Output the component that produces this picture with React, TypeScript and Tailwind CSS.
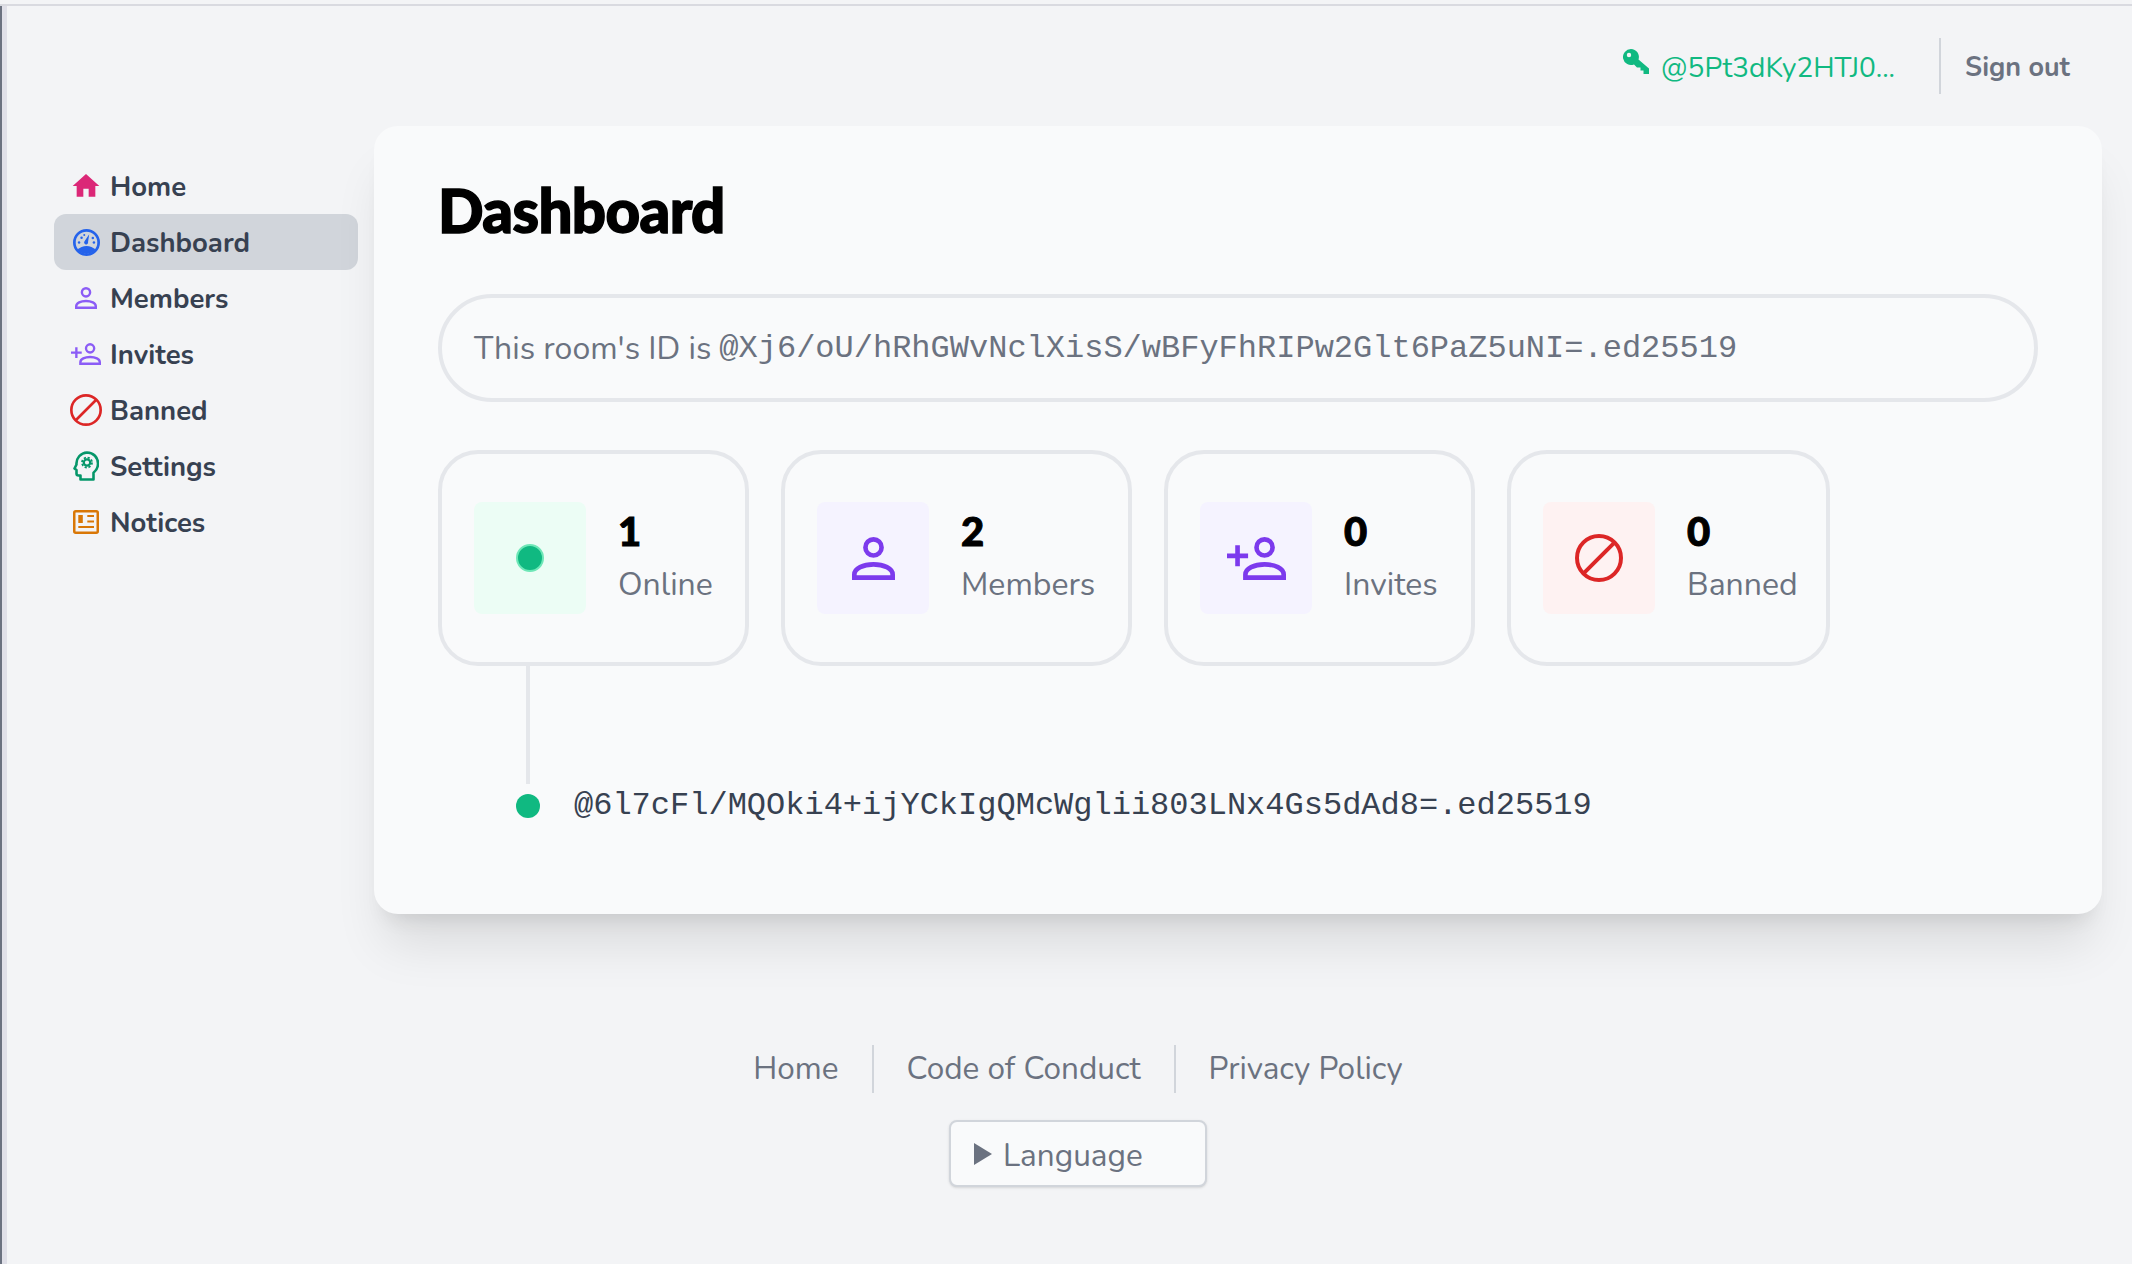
import React from 'react';

type IconProps = { className?: string };

const Home = ({ className }: IconProps) => (
  <svg viewBox="0 0 24 24" className={className} fill="currentColor"><path d="M10 20v-6h4v6h5v-8h3L12 3 2 12h3v8z" /></svg>
);
const Gauge = ({ className }: IconProps) => (
  <svg viewBox="0 0 24 24" className={className} fill="currentColor">
    <circle cx="12" cy="12" r="10.8" fill="none" stroke="currentColor" strokeWidth={2.4} />
    <path d="M3.8 18.5C6 16 9 15 12 15s6 1 8.2 3.5A11 11 0 0 1 3.8 18.5z" />
    <path d="M14.4 4.6 13.4 11.4a1.8 1.8 0 1 1-3-.8z" />
    <circle cx="7.6" cy="7.8" r="1.1" /><circle cx="5.4" cy="12" r="1.1" /><circle cx="10" cy="5.4" r="0.9" /><circle cx="17.6" cy="8" r="1.1" /><circle cx="18.6" cy="12" r="1.1" />
  </svg>
);
const User = ({ className }: IconProps) => (
  <svg viewBox="0 0 24 24" className={className} fill="none" stroke="currentColor" strokeWidth={2.6}>
    <circle cx="12" cy="5.8" r="4.5" />
    <path d="M1.3 22.7h21.4v-1.7c0-3.5-5-5.7-10.7-5.7S1.3 17.5 1.3 21z" />
  </svg>
);
const UserAdd = ({ className }: IconProps) => (
  <svg viewBox="0 0 33 24" className={className} fill="none" stroke="currentColor" strokeWidth={2.6}>
    <circle cx="21" cy="5.8" r="4.5" />
    <path d="M10.3 22.7h21.4v-1.7c0-3.5-5-5.7-10.7-5.7s-10.7 2.2-10.7 5.7z" />
    <path d="M0 10.5h11.8M5.9 4.6v11.8" />
  </svg>
);
const Ban = ({ className }: IconProps) => (
  <svg viewBox="0 0 24 24" className={className} fill="none" stroke="currentColor" strokeWidth={2}><circle cx="12" cy="12" r="11" /><path d="M4.3 19.7 19.7 4.3" /></svg>
);
const HeadCog = ({ className }: IconProps) => (
  <svg viewBox="0 0 26 30" className={className} fill="none" stroke="currentColor" strokeWidth={2.6}>
    <path d="M7.5 28.5v-4H5.5a2 2 0 0 1-2-2V19l-2-1.5 2-4A11 11 0 0 1 14 1.5c6.5 0 11 5 11 11 0 4-2 7.300-4.500 9.200v6.800z" strokeLinejoin="round" />
    <circle cx="14" cy="11.500" r="3.200" strokeWidth={2.200} />
    <circle cx="14" cy="11.500" r="5" strokeWidth={1.800} strokeDasharray="2.200 1.730" />
  </svg>
);
const Newspaper = ({ className }: IconProps) => (
  <svg viewBox="0 0 26 24" className={className} fill="none" stroke="currentColor" strokeWidth={2.5}>
    <rect x="1.250" y="1.250" width="23.500" height="21.500" rx="1.500" />
    <rect x="5.300" y="5" width="4.500" height="8" fill="currentColor" stroke="none" />
    <path d="M14.300 6h6.700M14.300 11.500h6.700M5.300 17h15.700" strokeWidth={2} />
  </svg>
);
const Key = ({ className }: IconProps) => (
  <svg viewBox="0 0 26 27" className={className} fill="currentColor">
    <path fillRule="evenodd" d="M8 0a8 8 0 1 0 3 15.400l3 3h3.500v3h3v3.600H26v-5.500L15.500 10.500A8 8 0 0 0 8 0zM6 3.800a2.200 2.200 0 1 1 0 4.400 2.200 2.200 0 0 1 0-4.400z" />
  </svg>
);

const navItems = [
  { label: 'Home', icon: <Home className="w-[32px] h-[32px] text-[#db2777]" /> },
  { label: 'Dashboard', icon: <Gauge className="w-[27px] h-[27px] text-[#2563eb]" />, active: true },
  { label: 'Members', icon: <User className="w-[22px] h-[22px] text-[#8b5cf6]" /> },
  { label: 'Invites', icon: <UserAdd className="w-[30px] h-[22px] text-[#8b5cf6]" /> },
  { label: 'Banned', icon: <Ban className="w-[32px] h-[32px] text-[#dc2626]" /> },
  { label: 'Settings', icon: <HeadCog className="w-[26px] h-[30px] text-[#059669]" /> },
  { label: 'Notices', icon: <Newspaper className="w-[26px] h-[24px] text-[#d97706]" /> },
];

const stats = [
  { value: '1', label: 'Online', tile: 'bg-[#ecfdf5]', w: 'w-[311px]', icon: <span className="w-[28px] h-[28px] rounded-full bg-[#10b981] border-2 border-[#6ee7b7]" /> },
  { value: '2', label: 'Members', tile: 'bg-[#f5f3ff]', w: 'w-[351px]', icon: <User className="w-[43px] h-[43px] text-[#7c3aed]" /> },
  { value: '0', label: 'Invites', tile: 'bg-[#f5f3ff]', w: 'w-[311px]', icon: <UserAdd className="w-[59px] h-[43px] text-[#7c3aed]" /> },
  { value: '0', label: 'Banned', tile: 'bg-[#fef2f2]', w: 'w-[323px]', icon: <Ban className="w-[48px] h-[48px] text-[#dc2626]" /> },
];

const App: React.FC = () => {
  return (
    <div className='h-[1264px] overflow-hidden bg-[#f3f4f6] font-["Nunito","Noto_Sans",sans-serif]'>
      <div className="h-[4px]" />
      <div className="h-[2px] bg-[#d9dae0]" />
      <div className="flex h-[1258px]">
        {/* window edge */}
        <div className="w-[2px] bg-[#6b7280]" />
        <div className="w-[5px] bg-[#e0e0e8]" />
        <div className="flex-1 min-w-0">
          {/* Top bar */}
          <header className="h-[120px] flex justify-end items-start pt-[32px] pr-[62px]">
            <div className="flex items-center h-[56px]">
              <Key className="w-[26px] h-[27px] text-[#10b981] -mt-[7px]" />
              <span className="w-[234px] ml-[12px] text-[28px] text-[#10b981] truncate pt-[4px]">@5Pt3dKy2HTJ0...</span>
              <span className="w-[2px] h-[56px] bg-[#d1d5db] ml-[44px]" />
              <span className="ml-[24px] text-[27px] font-bold text-[#6b7280] pt-[4px]">Sign out</span>
            </div>
          </header>

          <div className="flex">
            {/* Sidebar */}
            <nav className="w-[367px] shrink-0 pl-[47px] pr-[16px] pt-[32px]">
              {navItems.map((item) => (
                <a key={item.label} className={`flex items-center h-[56px] rounded-xl ${item.active ? 'bg-[#d1d5db]' : ''}`}>
                  <span className="w-[64px] flex justify-center">{item.icon}</span>
                  <span className="ml-[-8px] pt-[4px] text-[27.5px] font-bold text-[#374151]">{item.label}</span>
                </a>
              ))}
            </nav>

            {/* Main card */}
            <main className="w-[1728px] h-[788px] rounded-3xl bg-[#f9fafb] shadow-[0_40px_50px_-10px_rgb(0_0_0_/_0.1),0_16px_20px_-12px_rgb(0_0_0_/_0.1)] pt-[40px] pl-[64px] pr-[64px]">
              <h1 className='text-[60px] leading-[88px] font-black tracking-[-0.6px] [-webkit-text-stroke:1.5px_#000] text-black font-["Lato",sans-serif]'>Dashboard</h1>
              <div className="mt-[40px] h-[108px] flex items-center rounded-[54px] border-4 border-[#e5e7eb] px-[32px] pt-[2px] text-[32px] text-[#6b7280]">
                <span>This room's ID is </span>
                <span className='ml-[8px] font-["Liberation_Mono",monospace]'>@Xj6/oU/hRhGWvNclXisS/wBFyFhRIPw2Glt6PaZ5uNI=.ed25519</span>
              </div>

              <div className="mt-[48px] flex gap-[32px]">
                {stats.map((s) => (
                  <div key={s.label} className={`${s.w} h-[216px] shrink-0 flex rounded-[40px] border-4 border-[#e5e7eb] px-[32px] py-[48px]`}>
                    <div className={`w-[112px] h-[112px] shrink-0 rounded-lg flex items-center justify-center ${s.tile}`}>{s.icon}</div>
                    <div className="ml-[32px]">
                      <div className='pt-[1px] text-[40px] leading-[56px] font-black [-webkit-text-stroke:1px_#000] text-black font-["Lato",sans-serif]'>{s.value}</div>
                      <div className="-mt-[2px] text-[32px] leading-[56px] text-[#6b7280]">{s.label}</div>
                    </div>
                  </div>
                ))}
              </div>

              {/* Online member */}
              <div className="ml-[88px] w-[4px] h-[118px] bg-[#e5e7eb]" />
              <div className="flex items-center ml-[78px] -mt-[2px]">
                <span className="w-[24px] h-[24px] rounded-full bg-[#10b981]" />
                <span className='ml-[34px] text-[32px] text-[#374151] font-["Liberation_Mono",monospace]'>@6l7cFl/MQOki4+ijYCkIgQMcWglii803LNx4Gs5dAd8=.ed25519</span>
              </div>
            </main>
          </div>

          {/* Footer */}
          <footer className="mt-[131px] flex flex-col items-center pl-[17px]">
            <div className="flex items-center text-[31.5px] text-[#6b7280] h-[48px]">
              <a className="pr-[33px]">Home</a>
              <span className="w-[2px] h-[48px] bg-[#d1d5db]" />
              <a className="px-[33px]">Code of Conduct</a>
              <span className="w-[2px] h-[48px] bg-[#d1d5db]" />
              <a className="pl-[33px]">Privacy Policy</a>
            </div>
            <div className="mt-[27px] w-[258px] h-[67px] flex items-center rounded-lg border-2 border-[#d1d5db] bg-[#f9fafb] shadow-sm pl-[23px] text-[31.5px] text-[#6b7280]">
              <span className="w-0 h-0 border-y-[11px] border-y-transparent border-l-[18px] border-l-[#6b7280]" />
              <span className="ml-[11px] pt-[4px]">Language</span>
            </div>
          </footer>
        </div>
      </div>
    </div>
  );
};

export default App;
